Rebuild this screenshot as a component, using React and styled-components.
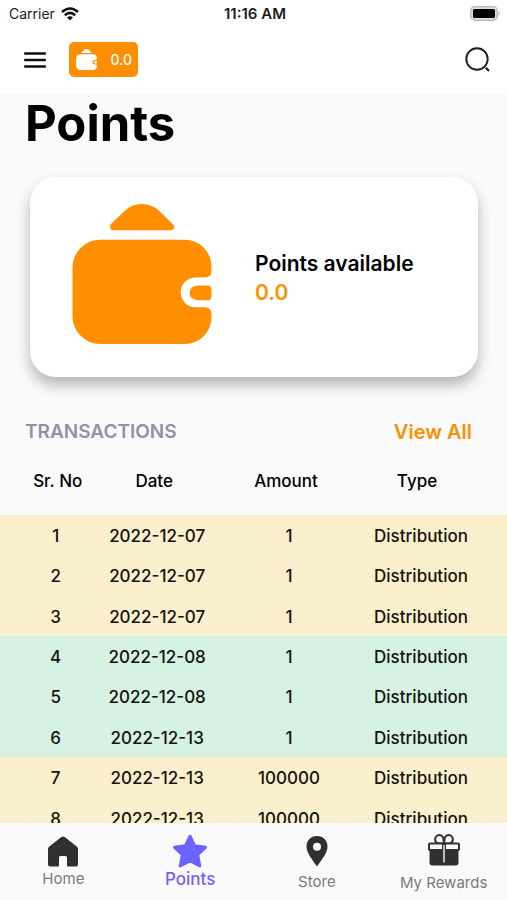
import React from "react";
import styled, { createGlobalStyle } from "styled-components";

const orange = "#ff8f00";
const violet = "#6c63ff";

const GlobalStyle = createGlobalStyle`
  *, *::before, *::after { box-sizing: border-box; }
  body { margin: 0; background: #fafafa; font-family: Inter, "Liberation Sans", sans-serif; color: #000; }
  button { font: inherit; border: 0; padding: 0; background: none; color: inherit; cursor: pointer; }
  a { text-decoration: none; color: inherit; }
  svg { display: block; flex: none; }
`;

const Screen = styled.div`
  display: flex;
  flex-direction: column;
  height: 100vh;
  overflow: hidden;
`;

const StatusBar = styled.div`
  display: grid;
  grid-template-columns: 1fr auto 1fr;
  align-items: center;
  height: 27px;
  padding: 0 6px 0 9px;
  background: #fff;
  font-size: 14px;
  color: #1c1c1c;
`;

const Carrier = styled.div`
  display: flex;
  align-items: center;
  gap: 6px;
`;

const Clock = styled.time`
  font-size: 15px;
  font-weight: 600;
`;

const BatterySlot = styled.div`
  display: flex;
  justify-content: flex-end;
`;

const Toolbar = styled.header`
  display: flex;
  align-items: center;
  height: 67px;
  padding: 0 16px 2px 24px;
  background: #fff;
`;

const IconButton = styled.button`
  display: flex;
  margin-left: ${(p) => (p.$end ? "auto" : "0")};
`;

const PointsBadge = styled.button`
  display: flex;
  align-items: center;
  justify-content: space-between;
  width: 69px;
  height: 35px;
  margin-left: 23px;
  padding: 0 6px 0 7px;
  border-radius: 5px;
  background: ${orange};
  color: #fff;
  font-size: 14px;
  font-weight: 500;
`;

const Content = styled.main`
  flex: 1;
  min-height: 0;
  overflow: hidden;
`;

const Title = styled.h1`
  margin: 0 25px;
  font-size: 49px;
  line-height: 60px;
  font-weight: 700;
`;

const BalanceCard = styled.section`
  display: flex;
  align-items: center;
  gap: 43px;
  height: 200px;
  margin: 23px 29px 0 30px;
  padding: 0 24px 6px 42px;
  border-radius: 26px;
  background: #fff;
  box-shadow: 0 8px 14px rgba(0, 0, 0, 0.28);
`;

const WalletArt = styled.div`
  color: ${orange};
`;

const BalanceText = styled.div`
  display: flex;
  flex-direction: column;
  padding-top: 8px;
  font-size: 21px;
  line-height: 29px;
  font-weight: 600;
`;

const BalanceValue = styled.span`
  color: ${orange};
`;

const SectionHead = styled.div`
  display: flex;
  align-items: center;
  justify-content: space-between;
  margin-top: 40px;
  padding: 0 35px 0 25px;
  line-height: 30px;
`;

const SectionTitle = styled.h2`
  margin: 0;
  font-size: 19px;
  font-weight: 600;
  color: #8f92a8;
`;

const ViewAll = styled.a`
  font-size: 20px;
  font-weight: 600;
  color: ${orange};
`;

const Table = styled.table`
  width: 100%;
  table-layout: fixed;
  border-collapse: collapse;
  font-size: 17px;
  line-height: 24px;
  text-align: center;
`;

const HeadCell = styled.th`
  width: ${(p) => p.$width};
  height: 68px;
  padding: 0 6px 0 0;
  font-weight: 500;
  white-space: nowrap;

  &:first-child { padding: 0 0 0 14px; }
  &:last-child { padding: 0 38px 0 0; }
`;

const RowGroup = styled.tbody`
  background: ${(p) => (p.$tone === "mint" ? "#d6f2e2" : "#fbf0cd")};

  tr:last-child td { height: 41px; }
`;

const Cell = styled.td`
  height: 40px;
  padding: 2px 0 0;
  font-weight: 500;
  color: #15130c;
  white-space: nowrap;

  &:first-child { padding-left: 10px; }
  &:last-child { padding-right: 30px; }
`;

const TabBar = styled.nav`
  display: grid;
  grid-template-columns: repeat(4, 1fr);
  height: 77px;
  background: #fafafa;
`;

const Tab = styled.a`
  display: flex;
  flex-direction: column;
  align-items: center;
  gap: ${(p) => p.$gap};
  padding-top: 10px;
  font-size: ${(p) => (p.$active ? "17px" : "15px")};
  line-height: 20px;
  font-weight: ${(p) => (p.$active ? 500 : 400)};
  color: ${(p) => (p.$active ? violet : "#7b7b7b")};
  white-space: nowrap;
`;

const Wallet = ({ size }) => (
  <svg width={size} height={size} viewBox="0 0 140 141" fill="currentColor" aria-hidden="true">
    <path d="M41 26.500q-4-.5-3-4.500.3-1.500 1.500-2.500L53 6.500Q60 0 70 0t17.500 7L101.500 21q1.500 1.500 1 3-.7 2.500-3.500 2.500Z" />
    <path d="M28 36H113A27 27 0 0 1 140 63V67Q140 74 133 74H124A15 15 0 0 0 124 104H133Q140 104 140 111V114A27 27 0 0 1 113 141H28A28 28 0 0 1 0 113V64A28 28 0 0 1 28 36Z" />
    <path d="M126 82H136Q140 82 140 86V93Q140 97 136 97H126Q118 96 118 89.500T126 82Z" />
  </svg>
);

const Wifi = () => (
  <svg width="18" height="14" viewBox="0 0 18 14" fill="none" stroke="#111" strokeWidth="2.600" aria-hidden="true">
    <path d="M1 5Q9-2 17 5M3.800 8.200Q9 3.700 14.200 8.200" />
    <path d="M9 13.500 6 10.300Q9 8 12 10.300Z" fill="#111" stroke="none" />
  </svg>
);

const Battery = () => (
  <svg width="31" height="15" viewBox="0 0 31 15" aria-hidden="true">
    <rect x=".7" y=".7" width="26.600" height="13.600" rx="4" fill="#ddd" stroke="#b5b5b5" strokeWidth="1.200" />
    <rect x="3" y="3" width="22" height="9" rx="1.500" fill="#000" />
    <path d="M28.500 5Q31 7.500 28.500 10Z" fill="#b5b5b5" />
  </svg>
);

const MenuIcon = () => (
  <svg width="22" height="18" viewBox="0 0 22 18" stroke="#111" strokeWidth="2.500" strokeLinecap="round" aria-hidden="true">
    <path d="M1.200 2.500H20.800M1.200 9H20.800M1.200 15.500H20.800" />
  </svg>
);

const SearchIcon = () => (
  <svg width="26" height="26" viewBox="0 0 26 26" fill="none" stroke="#1d1d1d" strokeWidth="1.900" aria-hidden="true">
    <circle cx="12" cy="12" r="10.700" />
    <path d="M20.800 20.800 24 24" strokeWidth="2.200" />
  </svg>
);

const HomeIcon = () => (
  <svg width="32" height="34" viewBox="0 0 32 34" fill="#303030" aria-hidden="true">
    <path d="M14.300 4Q16 2.800 17.700 4L30 13.800Q31 14.700 31 16V31.500Q31 33.500 29 33.500H21Q20 33.500 20 32.500V24.500Q20 23 18.500 23H13.500Q12 23 12 24.500V32.500Q12 33.500 11 33.500H3Q1 33.500 1 31.500V16Q1 14.700 2 13.800Z" />
  </svg>
);

const StarIcon = () => (
  <svg width="36" height="36" viewBox="0 0 36 36" fill="currentColor" stroke="currentColor" strokeWidth="3" strokeLinejoin="round" aria-hidden="true">
    <path d="M18 3.200 22.500 12.700 33.500 14.300 25.700 21.700 27.800 33 18 28 8.200 33 10.300 21.700 2.500 14.300 13.500 12.700Z" />
  </svg>
);

const PinIcon = () => (
  <svg width="22" height="34" viewBox="0 0 22 34" aria-hidden="true">
    <path d="M11 3C4.800 3 .5 7.600 .5 13.500.5 20 6 26 11 33.500 16 26 21.500 20 21.500 13.500 21.500 7.600 17.200 3 11 3Z" fill="#303030" />
    <circle cx="11" cy="13.700" r="4" fill="#fafafa" />
  </svg>
);

const GiftIcon = () => (
  <svg width="34" height="34" viewBox="0 0 34 34" fill="none" stroke="#303030" strokeWidth="2" strokeLinejoin="round" aria-hidden="true">
    <path d="M17 10.500H12.500A4.200 4.200 0 1 1 16.500 6.500ZM17 10.500H21.500A4.200 4.200 0 1 0 17.500 6.500Z" />
    <path d="M3.500 17H30.500V29.500Q30.500 31.500 28.500 31.500H5.500Q3.500 31.500 3.500 29.500Z" fill="#303030" />
    <rect x="2" y="10.500" width="30" height="6.500" rx="1" fill="#fafafa" />
    <path d="M17 10.500V31" strokeWidth="4" />
    <path d="M17 12V29.500" stroke="#fafafa" strokeWidth="1.400" />
  </svg>
);

const columns = [
  { label: "Sr. No", width: "20%" },
  { label: "Date", width: "22%" },
  { label: "Amount", width: "30%" },
  { label: "Type", width: "28%" },
];

const groups = [
  { tone: "cream", rows: [[1, "2022-12-07", 1], [2, "2022-12-07", 1], [3, "2022-12-07", 1]] },
  { tone: "mint", rows: [[4, "2022-12-08", 1], [5, "2022-12-08", 1], [6, "2022-12-13", 1]] },
  { tone: "cream", rows: [[7, "2022-12-13", 100000], [8, "2022-12-13", 100000]] },
];

const tabs = [
  { label: "Home", Icon: HomeIcon, gap: "2px" },
  { label: "Points", Icon: StarIcon, gap: "0", active: true },
  { label: "Store", Icon: PinIcon, gap: "5px" },
  { label: "My Rewards", Icon: GiftIcon, gap: "6px" },
];

export default function App() {
  return (
    <Screen>
      <GlobalStyle />
      <StatusBar>
        <Carrier>Carrier <Wifi /></Carrier>
        <Clock>11:16 AM</Clock>
        <BatterySlot><Battery /></BatterySlot>
      </StatusBar>
      <Toolbar>
        <IconButton aria-label="Menu"><MenuIcon /></IconButton>
        <PointsBadge><Wallet size={21} />0.0</PointsBadge>
        <IconButton $end aria-label="Search"><SearchIcon /></IconButton>
      </Toolbar>
      <Content>
        <Title>Points</Title>
        <BalanceCard>
          <WalletArt><Wallet size={140} /></WalletArt>
          <BalanceText>
            <span>Points available</span>
            <BalanceValue>0.0</BalanceValue>
          </BalanceText>
        </BalanceCard>
        <SectionHead>
          <SectionTitle>TRANSACTIONS</SectionTitle>
          <ViewAll href="#transactions">View All</ViewAll>
        </SectionHead>
        <Table id="transactions">
          <thead>
            <tr>
              {columns.map((c) => (
                <HeadCell key={c.label} scope="col" $width={c.width}>{c.label}</HeadCell>
              ))}
            </tr>
          </thead>
          {groups.map((g) => (
            <RowGroup key={g.rows[0][0]} $tone={g.tone}>
              {g.rows.map(([no, date, amount]) => (
                <tr key={no}>
                  <Cell>{no}</Cell>
                  <Cell>{date}</Cell>
                  <Cell>{amount}</Cell>
                  <Cell>Distribution</Cell>
                </tr>
              ))}
            </RowGroup>
          ))}
        </Table>
      </Content>
      <TabBar>
        {tabs.map(({ label, Icon, gap, active }) => (
          <Tab key={label} href={`#${label}`} $gap={gap} $active={active} aria-current={active ? "page" : undefined}>
            <Icon />
            {label}
          </Tab>
        ))}
      </TabBar>
    </Screen>
  );
}
